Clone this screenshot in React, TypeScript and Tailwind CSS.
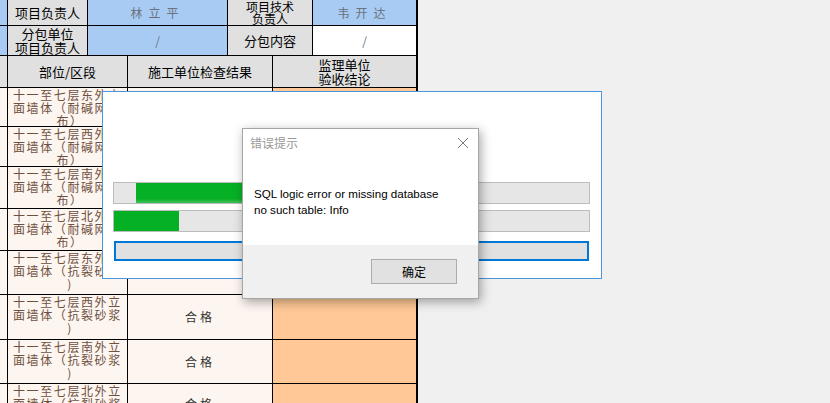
import React from "react";

const cjk = { fontFamily: '"Noto Sans CJK SC", "Noto Sans", sans-serif' };

const dataRows = [
  { lines: ["十一至七层东外立", "面墙体（耐碱网", "布）"], h: "h-[38px]", result: "" },
  { lines: ["十一至七层西外立", "面墙体（耐碱网", "布）"], h: "h-[39px]", result: "" },
  { lines: ["十一至七层南外立", "面墙体（耐碱网", "布）"], h: "h-[41px]", result: "" },
  { lines: ["十一至七层北外立", "面墙体（耐碱网", "布）"], h: "h-[41px]", result: "" },
  { lines: ["十一至七层东外立", "面墙体（抗裂砂浆", ")"], h: "h-[43px]", result: "" },
  { lines: ["十一至七层西外立", "面墙体（抗裂砂浆", ")"], h: "h-[44px]", result: "合格" },
  { lines: ["十一至七层南外立", "面墙体（抗裂砂浆", ")"], h: "h-[43px]", result: "合格" },
  { lines: ["十一至七层北外立", "面墙体（抗裂砂浆", ")"], h: "h-[40px]", result: "合格" },
];

function Sheet() {
  return (
    <div className="flex w-[418px] flex-col gap-px border-r-2 border-black bg-black" style={cjk}>
      <div className="grid h-[25px] grid-cols-[7px_79px_139px_84px_1fr] gap-x-px">
        <div className="bg-[#a8cbf3]" />
        <div className="flex items-center justify-center bg-[#e0e0e0] text-[13px] text-black">项目负责人</div>
        <div className="flex items-center justify-center bg-[#a8cbf3] text-[12px] tracking-[6px] text-[#6a7280]">林立平</div>
        <div className="flex flex-col items-center justify-center overflow-hidden bg-[#e0e0e0] text-[12px] leading-[12px] text-black">
          <span className="shrink-0">项目技术</span>
          <span className="shrink-0">负责人</span>
        </div>
        <div className="flex items-center justify-center bg-[#a8cbf3] text-[12px] tracking-[6px] text-[#6a7280]">韦开达</div>
      </div>
      <div className="grid h-[29px] grid-cols-[7px_79px_139px_84px_1fr] gap-x-px">
        <div className="bg-[#a8cbf3]" />
        <div className="flex flex-col items-center justify-center bg-[#e0e0e0] text-[13px] leading-[14px] text-black">
          <span>分包单位</span>
          <span>项目负责人</span>
        </div>
        <div className="flex items-center justify-center bg-[#a8cbf3] text-[12px] text-[#6a7280]">/</div>
        <div className="flex items-center justify-center bg-[#e0e0e0] text-[13px] text-black">分包内容</div>
        <div className="flex items-center justify-center bg-white text-[12px] text-[#6a7280]">/</div>
      </div>
      <div className="grid h-[31px] grid-cols-[7px_119px_144px_1fr] gap-x-px">
        <div className="bg-[#e0e0e0]" />
        <div className="flex items-center justify-center bg-[#e0e0e0] text-[13px] text-black">部位/区段</div>
        <div className="flex items-center justify-center bg-[#e0e0e0] text-[13px] text-black">施工单位检查结果</div>
        <div className="flex flex-col items-center justify-center bg-[#e0e0e0] text-[13px] leading-[14px] text-black">
          <span>监理单位</span>
          <span>验收结论</span>
        </div>
      </div>
      {dataRows.map((r, i) => (
        <div key={i} className={`grid ${r.h} grid-cols-[7px_119px_144px_1fr] gap-x-px`}>
          <div className="bg-[#fdf5f0]" />
          <div className="flex flex-col overflow-hidden bg-[#fdf5f0] pl-[5px] text-[12px] leading-[13px] tracking-[1.6px] text-[#6e5040]">
            {r.lines.map((l, j) => (
              <span key={j} className={`shrink-0 whitespace-nowrap ${j === r.lines.length - 1 ? "text-center" : "text-left"}`}>{l}</span>
            ))}
          </div>
          <div className="flex items-center justify-center bg-[#fdf5f0] text-[12px] tracking-[3px] text-[#333]">
            {r.result}
          </div>
          <div className="bg-[#ffc896]" />
        </div>
      ))}
    </div>
  );
}

function ProgressWindow() {
  return (
    <div className="absolute left-[102px] top-[91px] flex h-[188px] w-[500px] flex-col border border-[#4a96dc] bg-white pt-[90px]">
      <div className="relative ml-[10px] h-[22px] w-[477px] border border-[#bcbcbc] bg-[#e6e6e6]">
        <div className="absolute left-[22px] top-0 h-full w-[300px] bg-gradient-to-b from-[#06b025] from-80% to-[#3cc35a]" />
      </div>
      <div className="relative ml-[10px] mt-[6px] h-[22px] w-[477px] border border-[#bcbcbc] bg-[#e6e6e6]">
        <div className="absolute left-0 top-0 h-full w-[65px] bg-[#06b025]" />
      </div>
      <div className="ml-[11px] mt-[9px] h-[20px] w-[475px] border-2 border-[#0078d7] bg-[#e1e1e1]" />
    </div>
  );
}

function ErrorDialog() {
  return (
    <div className="absolute left-[242px] top-[128px] flex h-[171px] w-[237px] flex-col border border-[#a6a6a6] bg-white shadow-[2px_3px_10px_rgba(0,0,0,0.35)]">
      <div className="flex h-[28px] items-center justify-between pl-[7px] pr-[9px]">
        <span className="text-[12px] text-[#9a9a9a]" style={cjk}>错误提示</span>
        <svg width="12" height="12" viewBox="0 0 12 12" className="text-[#7a7a7a]">
          <path d="M1 1 L11 11 M11 1 L1 11" stroke="currentColor" strokeWidth="1" fill="none" />
        </svg>
      </div>
      <div className="flex flex-1 flex-col pl-[11px] pt-[29px] text-[11.6px] leading-[16px] text-black" style={{ fontFamily: '"Liberation Sans", Arial, sans-serif' }}>
        <span>SQL logic error or missing database</span>
        <span>no such table: Info</span>
      </div>
      <div className="flex h-[53px] items-start justify-end bg-[#f0f0f0] pr-[21px] pt-[14px]">
        <button className="flex h-[25px] w-[86px] items-center justify-center border border-[#adadad] bg-[#e1e1e1] text-[12px] text-black" style={cjk}>
          确定
        </button>
      </div>
    </div>
  );
}

export default function App() {
  return (
    <div className="relative h-[403px] w-[830px] overflow-hidden bg-[#f0f0f0]">
      <Sheet />
      <ProgressWindow />
      <ErrorDialog />
    </div>
  );
}
